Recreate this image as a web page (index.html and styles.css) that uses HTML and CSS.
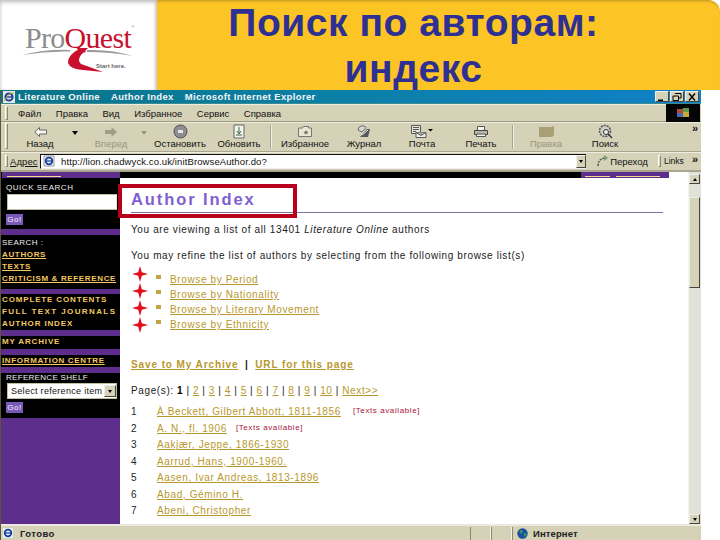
FILE: index.html
```html
<!DOCTYPE html>
<html lang="ru">
<head>
<meta charset="utf-8">
<title>Поиск по авторам: индекс</title>
<link rel="stylesheet" href="styles.css">
</head>
<body>
<header class="slide-head">
  <div class="logo">
    <div class="logo-word"><span class="pro">Pro</span><span class="quest">Quest</span><sup class="reg">®</sup></div>
    <svg class="logo-swoosh" width="116" height="32" viewBox="0 0 116 32">
      <path d="M1 10 Q25 4 49 5 L49 6.500 Q25 6 1 10Z" fill="#9a9a9a"/>
      <path d="M66 5 Q90 4 112 11 Q90 7 66 7Z" fill="#9a9a9a"/>
      <path d="M60 3 Q46 10 47 18 Q49 24 62 25 L82 27 Q66 21 60 19 Q56 15 60 10 Q64 6 67 3Z" fill="#c8102e"/>
    </svg>
    <div class="logo-tag">Start here.</div>
  </div>
  <h1 class="slide-title">Поиск по авторам:<br>индекс</h1>
</header>

<main class="stage">
  <div class="window">
    <div class="titlebar">
      <svg class="ie-icon" width="12" height="12" viewBox="0 0 12 12"><rect width="12" height="12" fill="#e8e8e8"/><circle cx="6" cy="6" r="3.600" fill="none" stroke="#1c3f9c" stroke-width="2"/><path d="M2 6h8" stroke="#1c3f9c" stroke-width="1.400"/><path d="M1 10 Q6 1 11 2" fill="none" stroke="#c9a520"/></svg>
      <div class="title-text"><span>Literature Online</span><span>Author Index</span><span>Microsoft Internet Explorer</span></div>
      <div class="win-buttons">
        <div class="win-btn"><svg width="10" height="8" viewBox="0 0 10 8"><path d="M1 6.500h5v1.500H1z" fill="#000"/></svg></div>
        <div class="win-btn"><svg width="10" height="8" viewBox="0 0 10 8"><path d="M3 .5h6v4.500H7M1 3h5.500v4.500H1z" fill="none" stroke="#000"/></svg></div>
        <div class="win-btn"><svg width="10" height="8" viewBox="0 0 10 8"><path d="M2 0.500l6 7M8 0.500l-6 7" stroke="#000" stroke-width="1.400"/></svg></div>
      </div>
    </div>

    <div class="menubar">
      <div class="grip"></div>
      <nav class="menu"><span>Файл</span><span>Правка</span><span>Вид</span><span>Избранное</span><span>Сервис</span><span>Справка</span></nav>
      <div class="flag"><svg width="14" height="12" viewBox="0 0 14 12"><path d="M1 2h6v4H1z" fill="#b34a3a"/><path d="M7 1h6v4H7z" fill="#5a9a4a"/><path d="M1 6h6v4H1z" fill="#4a6ab0"/><path d="M7 5h6v5H7z" fill="#c9a93a"/></svg></div>
    </div>

    <div class="toolbar">
      <div class="grip tall"></div>
      <div class="tool"><svg width="13" height="10" viewBox="0 0 13 10"><path d="M5.500 .5L.8 5l4.700 4.500V7h7V3h-7z" fill="#f8f8f2" stroke="#666"/></svg><span>Назад</span></div>
      <div class="drop"><i></i></div>
      <div class="tool off"><svg width="12" height="10" viewBox="0 0 12 10"><path d="M6.500 0L12 5l-5.500 5V7H0V3h6.500z" fill="#a09e86"/></svg><span>Вперед</span></div>
      <div class="drop off"><i></i></div>
      <div class="tool"><svg width="15" height="15" viewBox="0 0 15 15"><circle cx="7.500" cy="7.500" r="6.500" fill="#8d8d92" stroke="#55555c"/><path d="M5 6h5v3H5z" fill="#e8e8e8"/></svg><span>Остановить</span></div>
      <div class="tool"><svg width="12" height="15" viewBox="0 0 12 15"><path d="M1 1h10v13H1z" fill="#f2f2ec" stroke="#666"/><path d="M6 3v6M4 7l2 3 2-3M3 11h6" fill="none" stroke="#3c6a4a"/></svg><span>Обновить</span></div>
      <div class="tsep"></div>
      <div class="tool"><svg width="14" height="11" viewBox="0 0 14 11"><path d="M.5 2h4l1-1.500h5V2h3v8.500H.5z" fill="#e9e6d4" stroke="#777"/><path d="M8 4l.8 1.500 1.700.2-1.200 1.200.3 1.600L8 7.700l-1.600.8.300-1.600-1.200-1.200 1.700-.2z" fill="#777760"/></svg><span>Избранное</span></div>
      <div class="tool"><svg width="14" height="13" viewBox="0 0 14 13"><path d="M1 5a4.500 4.500 0 0 1 8-2.500L5 7z" fill="#d8d8d8" stroke="#666"/><path d="M3 12l7-8 3 0-2 8z" fill="#55585a"/><path d="M5 10l6-5" stroke="#e8e8e0"/></svg><span>Журнал</span></div>
      <div class="tool"><svg width="22" height="13" viewBox="0 0 22 13"><path d="M.5.5h9v8h-9z" fill="#e6e6dc" stroke="#555"/><path d="M2 2.500h6M2 4.500h6M2 6.500h3" stroke="#555"/><path d="M5 7.500h10v5H5z" fill="#f3f3ee" stroke="#555"/><path d="M5 7.500l5 3 5-3" fill="#a8b8a0" stroke="#555"/><path d="M17 4h5l-2.500 2.500z" fill="#000"/></svg><span>Почта</span></div>
      <div class="tool"><svg width="14" height="11" viewBox="0 0 14 11"><path d="M3.500.5h7v4h-7z" fill="#f5f5f0" stroke="#555"/><path d="M.5 4.500h13v4H.5z" fill="#b9b8a8" stroke="#444"/><path d="M2.500 8h9v2.500h-9z" fill="#f3f3ee" stroke="#555"/></svg><span>Печать</span></div>
      <div class="tsep"></div>
      <div class="tool off"><svg width="15" height="11" viewBox="0 0 15 11"><path d="M0 1h12l3-1v9l-2 2H0z" fill="#ab9f78"/></svg><span>Правка</span></div>
      <div class="tool"><svg width="15" height="15" viewBox="0 0 15 15"><circle cx="7" cy="7" r="5.500" fill="#cfcfc8" stroke="#55555a" stroke-dasharray="2 1" stroke-width="1.600"/><circle cx="8" cy="8" r="2.500" fill="#eee" stroke="#333"/><path d="M10 10l4 4" stroke="#333" stroke-width="1.500"/></svg><span>Поиск</span></div>
      <div class="chevrons">»</div>
    </div>

    <div class="addressbar">
      <div class="grip short"></div>
      <span class="addr-label">Адрес</span>
      <div class="addr-field">
        <svg width="12" height="12" viewBox="0 0 12 12"><path d="M1 1h10v10H1z" fill="#e8eef8" stroke="#999"/><circle cx="6" cy="6" r="3.300" fill="none" stroke="#173fa0" stroke-width="1.800"/><path d="M3 6h6" stroke="#173fa0" stroke-width="1.200"/></svg>
        <span class="addr-url">http://lion.chadwyck.co.uk/initBrowseAuthor.do?</span>
        <div class="addr-drop"><i></i></div>
      </div>
      <div class="go"><svg width="12" height="12" viewBox="0 0 12 12"><path d="M1 11 Q1 4 8 3" fill="none" stroke="#555" stroke-width="1.500" stroke-dasharray="2 1"/><path d="M7 0l4 3-4 3z" fill="#7a9a70"/></svg><span>Переход</span></div>
      <div class="grip short"></div>
      <span class="links">Links</span>
      <span class="chev-small">»</span>
    </div>

    <div class="viewport">
      <div class="page">
        <div class="topstrip">
          <div class="top-left"><i class="dash long"></i></div>
          <div class="top-fill"></div>
          <div class="top-right"><i class="dash short"></i><i class="dash mid"></i></div>
          <div class="top-end"></div>
        </div>
        <div class="columns">
          <aside class="side">
            <div class="side-block quick">
              <div class="side-label">QUICK SEARCH</div>
              <div class="side-input"></div>
              <div class="side-go">Go!</div>
            </div>
            <div class="band"></div>
            <div class="side-block search">
              <div class="side-plain">SEARCH :</div>
              <a class="side-link">AUTHORS</a>
              <a class="side-link">TEXTS</a>
              <a class="side-link">CRITICISM &amp; REFERENCE</a>
            </div>
            <div class="band thin"></div>
            <div class="side-block contents">
              <div class="side-strong">COMPLETE CONTENTS</div>
              <div class="side-strong wide">FULL TEXT JOURNALS</div>
              <div class="side-strong">AUTHOR INDEX</div>
            </div>
            <div class="band"></div>
            <div class="side-block single"><div class="side-strong">MY ARCHIVE</div></div>
            <div class="band"></div>
            <div class="side-block single low"><a class="side-link">INFORMATION CENTRE</a></div>
            <div class="band"></div>
            <div class="side-block shelf">
              <div class="side-label">REFERENCE SHELF</div>
              <div class="side-select"><span>Select reference item</span><div class="select-btn"><i></i></div></div>
              <div class="side-go">Go!</div>
            </div>
          </aside>

          <section class="content">
            <h2 class="page-title">Author Index</h2>
            <p class="lead">You are viewing a list of all 13401 <em>Literature Online</em> authors</p>
            <p class="lead second">You may refine the list of authors by selecting from the following browse list(s)</p>
            <div class="browse">
              <div class="stars">
                <svg viewBox="0 0 16 16" width="16" height="16"><path d="M8 0l1.800 6.200L16 8l-6.200 1.800L8 16 6.200 9.800 0 8l6.200-1.800z" fill="#e0101c"/></svg>
                <svg viewBox="0 0 16 16" width="16" height="16"><path d="M8 0l1.800 6.200L16 8l-6.200 1.800L8 16 6.200 9.800 0 8l6.200-1.800z" fill="#e0101c"/></svg>
                <svg viewBox="0 0 16 16" width="16" height="16"><path d="M8 0l1.800 6.200L16 8l-6.200 1.800L8 16 6.200 9.800 0 8l6.200-1.800z" fill="#e0101c"/></svg>
                <svg viewBox="0 0 16 16" width="16" height="16"><path d="M8 0l1.800 6.200L16 8l-6.200 1.800L8 16 6.200 9.800 0 8l6.200-1.800z" fill="#e0101c"/></svg>
              </div>
              <ul class="browse-list">
                <li><a>Browse by Period</a></li>
                <li><a>Browse by Nationality</a></li>
                <li><a>Browse by Literary Movement</a></li>
                <li><a>Browse by Ethnicity</a></li>
              </ul>
            </div>
            <div class="save"><a>Save to My Archive</a><span>|</span><a>URL for this page</a></div>
            <div class="pager">Page(s): <b>1</b> | <a>2</a> | <a>3</a> | <a>4</a> | <a>5</a> | <a>6</a> | <a>7</a> | <a>8</a> | <a>9</a> | <a>10</a> | <a>Next&gt;&gt;</a></div>
            <ol class="authors">
              <li><span class="num">1</span><a class="pad-a">À Beckett, Gilbert Abbott, 1811-1856</a><span class="avail first-avail">[Texts available]</span></li>
              <li><span class="num">2</span><a class="pad-b">A. N., fl. 1906</a><span class="avail">[Texts available]</span></li>
              <li><span class="num">3</span><a>Aakjær, Jeppe, 1866-1930</a></li>
              <li><span class="num">4</span><a>Aarrud, Hans, 1900-1960.</a></li>
              <li><span class="num">5</span><a>Aasen, Ivar Andreas, 1813-1896</a></li>
              <li><span class="num">6</span><a>Abad, Gémino H.</a></li>
              <li><span class="num">7</span><a>Abeni, Christopher</a></li>
            </ol>
          </section>
        </div>
      </div>
      <div class="scrollbar">
        <div class="sb-btn top"><i class="up"></i></div>
        <div class="sb-gap"></div>
        <div class="sb-thumb"></div>
        <div class="sb-track"></div>
        <div class="sb-btn"><i></i></div>
      </div>
    </div>

    <footer class="statusbar">
      <svg width="12" height="12" viewBox="0 0 12 12"><path d="M1 1h10v10H1z" fill="#e8eef8"/><circle cx="6" cy="6" r="3.300" fill="none" stroke="#173fa0" stroke-width="1.800"/><path d="M3 6h6" stroke="#173fa0" stroke-width="1.200"/></svg>
      <span class="status-text">Готово</span>
      <div class="status-cell"></div>
      <div class="status-cell"></div>
      <div class="status-zone"><svg width="11" height="11" viewBox="0 0 11 11"><circle cx="5.500" cy="5.500" r="5.200" fill="#1c4f9c"/><path d="M2 3l3-1 1 2-2 2zM7 5l3 1-2 3-1-1z" fill="#3a9a5a"/></svg><span>Интернет</span></div>
    </footer>
  </div>
  <div class="highlight" aria-hidden="true"></div>
</main>
</body>
</html>
```

FILE: styles.css
```css
* { box-sizing: border-box; }
html, body { margin: 0; padding: 0; }
body {
  width: 720px;
  height: 540px;
  overflow: hidden;
  background: #fff;
  font-family: "Liberation Sans", Arial, sans-serif;
  color: #111;
}
i { display: block; }

/* Slide header */
.slide-head { display: flex; height: 90px; }
.logo {
  position: relative;
  width: 157px;
  background: #fff;
  box-shadow: inset 0 4px 4px -2px #bbb, inset -3px 0 3px -1px #ccc, inset 3px 0 3px -2px #ddd;
}
.logo-word {
  position: absolute;
  left: 25px;
  top: 20px;
  font-family: "Liberation Serif", serif;
  font-size: 30px;
  line-height: 36px;
  letter-spacing: -.7px;
  white-space: nowrap;
}
.pro { color: #8c8c8e; }
.quest { color: #c8102e; }
.reg { font-size: 5px; color: #888; vertical-align: 20px; line-height: 0; }
.logo-swoosh { position: absolute; left: 21px; top: 45px; }
.logo-tag {
  position: absolute;
  left: 96px;
  top: 62px;
  font-size: 6px;
  line-height: 8px;
  font-weight: bold;
  color: #666;
}
.slide-title {
  flex: 1;
  margin: 0;
  padding: 0 50px 0 0;
  background: #fdc425;
  border-radius: 0 12px 0 0;
  box-shadow: inset 0 3px 3px -2px #b89020;
  color: #2e3192;
  font-size: 39px;
  line-height: 46px;
  font-weight: bold;
  text-align: center;
  letter-spacing: .55px;
  height: 90px;
}

/* Browser window */
.stage { position: relative; height: 450px; }
.window {
  width: 701px;
  height: 450px;
  background: #d5d2b8;
  display: flex;
  flex-direction: column;
  border-left: 1px solid #5a5838;
}
.titlebar {
  height: 14px;
  display: flex;
  align-items: center;
  padding: 0 1px 0 2px;
  background: linear-gradient(90deg, #0a7488, #0c80a8 50%, #1080c8);
  color: #f4f4f4;
  font-weight: bold;
  font-size: 9.5px;
  letter-spacing: .35px;
  border-bottom: 1px solid #3a8a94;
}
.title-text { display: flex; gap: 11px; padding-left: 3px; flex: 1; white-space: nowrap; }
.win-buttons { display: flex; gap: 1px; padding-right: 1px; }
.win-btn {
  width: 14px;
  height: 11px;
  background: #d5d2b8;
  border: 1px solid #eee;
  border-right-color: #444;
  border-bottom-color: #444;
  display: flex;
  align-items: center;
  justify-content: center;
}

.grip {
  width: 3px;
  height: 14px;
  margin: 0 6px 0 2px;
  border: 1px solid #fff;
  border-right-color: #8a8870;
  border-bottom-color: #8a8870;
  flex: none;
}
.grip.tall { height: 26px; margin-right: 0; }
.grip.short { height: 12px; margin: 0 2px 0 2px; }

.menubar {
  height: 18px;
  display: flex;
  align-items: center;
  border-top: 1px solid #f0eee0;
  border-bottom: 1px solid #9a9880;
  font-size: 9.5px;
  padding-left: 2px;
}
.menu { display: flex; gap: 14.5px; flex: 1; padding-left: 4px; }
.flag {
  width: 34px;
  height: 18px;
  background: #050505;
  display: flex;
  align-items: center;
  justify-content: center;
  margin-right: 1px;
}

.toolbar {
  height: 30px;
  display: grid;
  grid-template-columns: 12px 50px 20px 52px 14px 58px 60px 4px 64px 54px 62px 56px 8px 58px 60px 1fr;
  align-items: start;
  border-top: 1px solid #f0eee0;
  border-bottom: 1px solid #a8a690;
  font-size: 9.5px;
  padding-left: 2px;
}
.tool {
  display: grid;
  grid-template-rows: 15px 11px;
  justify-items: center;
  align-items: center;
  white-space: nowrap;
  line-height: 11px;
}
.tool svg { margin-top: 2px; display: block; }
.tool.off { color: #98967e; }
.drop { display: flex; justify-content: center; padding-top: 8px; }
.drop i { border: 3px solid transparent; border-top: 4px solid #000; border-bottom: 0; }
.drop.off i { border-top-color: #98967e; }
.tsep {
  width: 2px;
  height: 24px;
  margin-top: 2px;
  justify-self: center;
  background: #a8a690;
  border-right: 1px solid #f0eee0;
}
.chevrons {
  justify-self: end;
  padding-right: 3px;
  font-size: 11px;
  line-height: 11px;
  font-weight: bold;
}

.addressbar {
  height: 17px;
  display: flex;
  align-items: center;
  font-size: 9.5px;
  padding-left: 2px;
  border-top: 1px solid #f0eee0;
  white-space: nowrap;
}
.addr-label { width: 30px; text-decoration: underline; text-decoration-thickness: 1px; letter-spacing: .1px; }
.addr-field {
  width: 546px;
  height: 15px;
  background: #fff;
  border-top: 1px solid #111;
  border-left: 1px solid #111;
  border-bottom: 1px solid #eee;
  display: flex;
  align-items: center;
  padding-left: 2px;
}
.addr-url { flex: 1; padding-left: 6px; font-size: 9.5px; letter-spacing: .11px; }
.addr-drop, .select-btn {
  width: 10px;
  height: 13px;
  background: #d5d2b8;
  border: 1px solid #eee;
  border-right-color: #444;
  border-bottom-color: #444;
  display: flex;
  align-items: center;
  justify-content: center;
  flex: none;
}
.select-btn { width: 12px; height: 12px; }
.addr-drop i, .select-btn i, .sb-btn i { border: 2.500px solid transparent; border-top: 3px solid #000; border-bottom: 0; }
.go { width: 70px; display: flex; align-items: center; justify-content: center; gap: 1px; padding-left: 3px; }
.links { width: 26px; font-size: 8.5px; padding-left: 1px; }
.chev-small { font-size: 11px; font-weight: bold; line-height: 8px; padding: 0 0 5px 3px; }

/* Page viewport */
.viewport { flex: 1; min-height: 0; display: flex; border-top: 2px solid #a8a690; background: #fff; margin-top: 1px; }
.page { width: 687px; display: flex; flex-direction: column; }
.topstrip { height: 6px; display: flex; overflow: hidden; flex: none; }
.dash { height: 1px; background: #f0dc90; margin-top: 4px; }
.dash.long { width: 54px; }
.dash.short { width: 25px; }
.dash.mid { width: 44px; }
.top-left {
  width: 119px;
  background: #5d2e8c;
  border-left: 1px solid #000;
  display: flex;
  padding-left: 5px;
}
.top-fill { width: 461px; background: #000; }
.top-right {
  width: 88px;
  background: #5d2e8c;
  display: flex;
  gap: 6px;
  padding-left: 4px;
}
.top-end { flex: 1; background: #fff; }
.columns { flex: 1; min-height: 0; display: flex; }

/* Sidebar */
.side {
  width: 119px;
  flex: none;
  background: #5d2e8c;
  display: flex;
  flex-direction: column;
  font-size: 8px;
  line-height: 12px;
  letter-spacing: .55px;
}
.side-block { background: #000; padding-left: 1px; white-space: nowrap; }
.band { height: 6px; flex: none; }
.band.thin { height: 5px; }
.quick { height: 51px; padding: 4px 0 0 5px; color: #eee; }
.side-label { height: 12px; }
.side-input {
  width: 110px;
  height: 16px;
  margin-left: 1px;
  background: #fff;
  border: 1px solid #c0c0a0;
  border-right-color: #e8e8d0;
}
.side-go {
  width: 17px;
  height: 11px;
  margin-top: 4px;
  background: #7a5ab8;
  color: #f4f0ff;
  font-size: 8px;
  line-height: 11px;
  letter-spacing: .6px;
  text-align: center;
}
.search { height: 54px; padding-top: 2px; color: #eee; }
.side-plain { height: 12px; font-size: 8px; letter-spacing: .45px; }
.side-link { display: block; color: #f4c860; font-weight: bold; text-decoration: underline; font-size: 8px; letter-spacing: .65px; height: 12px; }
.contents { height: 36px; }
.side-strong { color: #f4c860; font-weight: bold; height: 12px; font-size: 8px; letter-spacing: .85px; }
.side-strong.wide { letter-spacing: 1.400px; }
.single { height: 13px; }
.single.low { height: 12px; }
.shelf { height: 45px; padding: 0 0 0 5px; color: #eee; }
.shelf .side-label { height: 10px; line-height: 10px; letter-spacing: .3px; }
.side-select {
  width: 110px;
  height: 16px;
  margin-left: 1px;
  background: #fff;
  border: 1px solid #c0c0a0;
  display: flex;
  align-items: center;
  justify-content: space-between;
  color: #111;
  padding: 0 0 0 3px;
  font-size: 9px;
  letter-spacing: .3px;
  overflow: hidden;
}
.side-select span { overflow: hidden; }
.shelf .side-go { margin-top: 3px; }

/* Main content */
.content { flex: 1; min-width: 0; padding: 0 25px 0 11px; font-size: 10px; letter-spacing: .62px; color: #222; }
.content a { color: #b8982c; text-decoration: underline; }
.page-title {
  margin: 0;
  height: 35px;
  padding-top: 12px;
  border-bottom: 1px solid #8070a0;
  color: #8060d0;
  font-size: 16.5px;
  line-height: 18px;
  letter-spacing: 1.900px;
  font-weight: bold;
}
.lead { margin: 11px 0 0; line-height: 12px; height: 12px; white-space: nowrap; }
.lead.second { margin-top: 14px; }
.browse { display: flex; height: 65px; margin-top: 6px; }
.stars { width: 24px; flex: none; display: flex; flex-direction: column; gap: 1px; margin: -2px 0 0 1px; }
.stars svg { display: block; }
.browse-list { list-style: none; margin: 0; padding: 4px 0 0; }
.browse-list li { height: 15px; line-height: 15px; position: relative; padding-left: 14px; }
.browse-list li::before {
  content: "";
  position: absolute;
  left: 0;
  top: 3px;
  width: 5px;
  height: 4px;
  background: #c0a840;
}
.save { margin-top: 25px; height: 14px; line-height: 14px; font-weight: bold; letter-spacing: .9px; white-space: nowrap; display: flex; gap: 6.5px; }
.pager { margin-top: 12px; height: 14px; line-height: 14px; white-space: nowrap; word-spacing: -.15px; }
.pager b { color: #000; }
.authors { list-style: none; margin: 6px 0 0; padding: 0; }
.authors li { height: 16.500px; line-height: 16.500px; display: flex; white-space: nowrap; }
.num { width: 26px; flex: none; }
.avail { color: #a8123c; font-size: 8px; letter-spacing: .6px; padding-left: 4px; line-height: 13px; }
.first-avail { line-height: 14px; padding-left: 7px; }
.pad-a { padding-right: 5px; }
.pad-b { padding-right: 5px; }

/* Scrollbar */
.scrollbar { flex: 1; display: flex; flex-direction: column; background: #e0e2d8; border-left: 1px solid #f4f4ee; padding-right: 1px; }
.sb-btn {
  height: 10px;
  flex: none;
  background: #d5d2b8;
  border: 1px solid #eee;
  border-right-color: #444;
  border-bottom-color: #444;
  display: flex;
  align-items: center;
  justify-content: center;
}
.sb-btn.top { margin-top: 2px; }
.sb-btn i.up { border-top: 0; border-bottom: 3px solid #000; }
.sb-gap { height: 13px; flex: none; }
.sb-thumb {
  height: 91px;
  flex: none;
  background: #d5d2b8;
  border: 1px solid #eee;
  border-right-color: #444;
  border-bottom-color: #444;
}
.sb-track { flex: 1; }

/* Status bar */
.statusbar {
  height: 16px;
  flex: none;
  display: flex;
  align-items: center;
  padding-left: 1px;
  font-size: 9.500px;
  font-weight: bold;
  border-top: 2px solid #eceadc;
}
.status-text { width: 456px; padding-left: 6px; letter-spacing: .4px; color: #222; }
.status-cell { width: 21px; height: 13px; border-left: 1px solid #8a8870; border-right: 1px solid #f4f4ee; }
.status-zone { flex: 1; display: flex; align-items: center; gap: 5px; padding-left: 4px; border-left: 1px solid #8a8870; height: 13px; letter-spacing: .1px; color: #222; }

/* Red marker placed over the page */
.highlight {
  position: absolute;
  left: 118px;
  top: 94px;
  width: 179px;
  height: 34px;
  border: 4px solid #b8001c;
  pointer-events: none;
}
```
